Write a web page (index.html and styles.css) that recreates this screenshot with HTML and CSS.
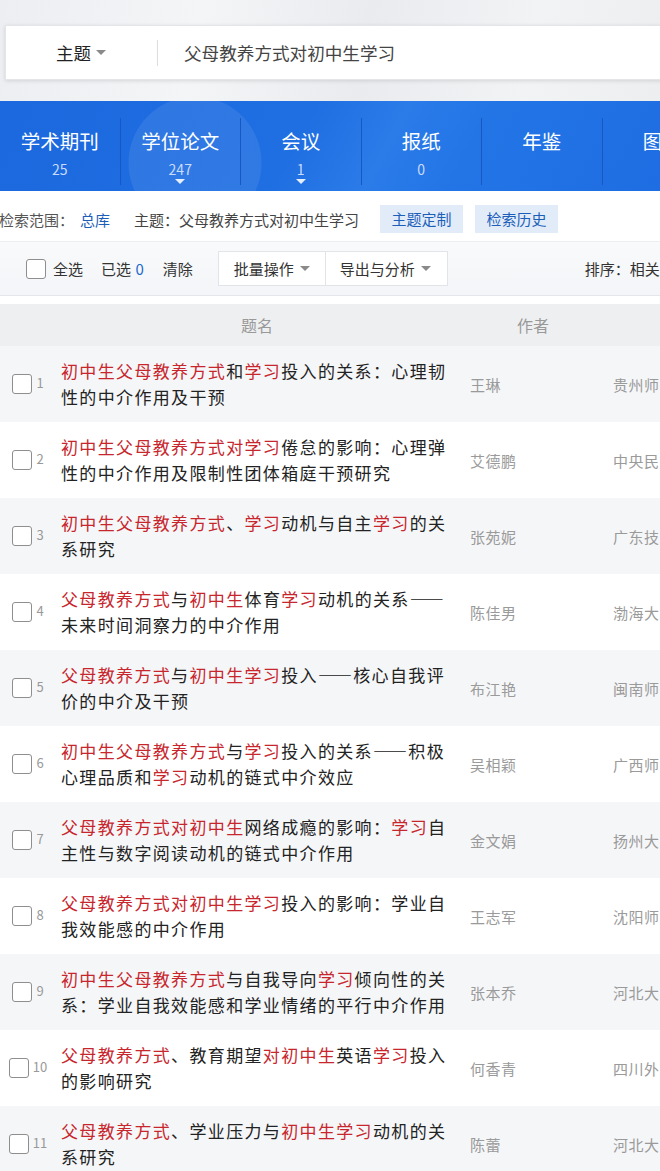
FILE: index.html
```html
<!DOCTYPE html>
<html lang="zh-CN">
<head>
  <meta charset="UTF-8" />
  <meta name="viewport" content="width=device-width, initial-scale=1.0"/>
  <title>检索结果</title>
  <link rel="stylesheet" href="styles.css">
</head>
<body>
  <!-- 검색창 -->
  <div class="top">
    <div class="search-box">
      <div class="field">主题 <span class="caret"></span></div>
      <div class="divider"></div>
      <div class="query">父母教养方式对初中生学习</div>
    </div>
  </div>

  <!-- 문헌 유형 탭 -->
  <div class="tabs">
    <div class="tab"><div class="tab-name">学术期刊</div><div class="tab-num">25</div></div>
    <div class="tab"><div class="tab-name">学位论文</div><div class="tab-num">247</div><span class="tab-caret"></span></div>
    <div class="tab"><div class="tab-name">会议</div><div class="tab-num">1</div><span class="tab-caret"></span></div>
    <div class="tab"><div class="tab-name">报纸</div><div class="tab-num">0</div></div>
    <div class="tab"><div class="tab-name">年鉴</div><div class="tab-num">&nbsp;</div></div>
    <div class="tab"><div class="tab-name">图书</div><div class="tab-num">&nbsp;</div></div>
  </div>

  <div class="scope">
    <span class="scope-label">检索范围：</span>
    <span class="scope-db">总库</span>
    <span class="scope-topic">主题：父母教养方式对初中生学习</span>
    <span class="chip">主题定制</span>
    <span class="chip">检索历史</span>
  </div>

  <div class="toolbar">
    <span class="box"></span>
    <span class="tool-text">全选</span>
    <span class="tool-text sel">已选 <em>0</em></span>
    <span class="tool-text">清除</span>
    <div class="drop-group">
      <div class="drop">批量操作 <span class="caret"></span></div>
      <div class="drop">导出与分析 <span class="caret"></span></div>
    </div>
    <span class="sort">排序：相关度</span>
  </div>

  <div class="thead">
    <div></div>
    <div class="th-title">题名</div>
    <div class="th-author">作者</div>
    <div></div>
  </div>

  <div id="list"></div>

  <script>
    // 결과 목록: [제목(HTML), 저자, 기관]
    const rows = [
      ['<b>初中生父母教养方式</b>和<b>学习</b>投入的关系：心理韧性的中介作用及干预', '王琳', '贵州师范大学'],
      ['<b>初中生父母教养方式对学习</b>倦怠的影响：心理弹性的中介作用及限制性团体箱庭干预研究', '艾德鹏', '中央民族大学'],
      ['<b>初中生父母教养方式</b>、<b>学习</b>动机与自主<b>学习</b>的关系研究', '张苑妮', '广东技术师范大学'],
      ['<b>父母教养方式</b>与<b>初中生</b>体育<b>学习</b>动机的关系——未来时间洞察力的中介作用', '陈佳男', '渤海大学'],
      ['<b>父母教养方式</b>与<b>初中生学习</b>投入——核心自我评价的中介及干预', '布江艳', '闽南师范大学'],
      ['<b>初中生父母教养方式</b>与<b>学习</b>投入的关系——积极心理品质和<b>学习</b>动机的链式中介效应', '吴相颖', '广西师范大学'],
      ['<b>父母教养方式对初中生</b>网络成瘾的影响：<b>学习</b>自主性与数字阅读动机的链式中介作用', '金文娟', '扬州大学'],
      ['<b>父母教养方式对初中生学习</b>投入的影响：学业自我效能感的中介作用', '王志军', '沈阳师范大学'],
      ['<b>初中生父母教养方式</b>与自我导向<b>学习</b>倾向性的关系：学业自我效能感和学业情绪的平行中介作用', '张本乔', '河北大学'],
      ['<b>父母教养方式</b>、教育期望<b>对初中生</b>英语<b>学习</b>投入的影响研究', '何香青', '四川外国语大学'],
      ['<b>父母教养方式</b>、学业压力与<b>初中生学习</b>动机的关系研究', '陈蕾', '河北大学']
    ];

    const list = document.getElementById('list');
    rows.forEach((r, i) => {
      const row = document.createElement('div');
      row.className = 'row' + (i % 2 === 0 ? ' odd' : '');
      row.innerHTML =
        `<div class="idx"><span class="box"></span><span class="num">${i + 1}</span></div>` +
        `<div class="title">${r[0]}</div>` +
        `<div class="author">${r[1]}</div>` +
        `<div class="org">${r[2]}</div>`;
      list.appendChild(row);
    });
  </script>
</body>
</html>
```

FILE: styles.css
```css
* { box-sizing: border-box; }
body {
  margin: 0;
  width: 660px;
  height: 1171px;
  overflow: hidden;
  background: #fff;
  font-family: "Noto Sans CJK SC", "Noto Sans", sans-serif;
  color: #333;
}

/* 상단 검색 */
.top {
  height: 101px;
  padding: 25px 0 0 5px;
  background: linear-gradient(100deg, #eceef1 0%, #f4f5f7 30%, #e9ebee 55%, #f2f3f5 80%, #eceef0 100%);
  overflow: hidden;
}
.search-box {
  width: 670px;
  height: 55px;
  background: #fff;
  border: 1px solid #e3e5e8;
  box-shadow: 0 1px 4px rgba(0,0,0,0.12);
  display: flex;
  align-items: center;
}
.field {
  width: 151px;
  padding-left: 50px;
  font-size: 17.5px;
  color: #222;
  display: flex;
  align-items: center;
  gap: 5px;
}
.divider { width: 1px; height: 26px; background: #ddd; }
.query { padding-left: 26px; font-size: 17.6px; color: #444; }
.caret {
  display: inline-block;
  width: 0; height: 0;
  border-left: 5px solid transparent;
  border-right: 5px solid transparent;
  border-top: 5px solid #8a8a8a;
}

/* 탭 */
.tabs {
  height: 90px;
  display: flex;
  overflow: hidden;
  background:
    radial-gradient(circle at 195px 62px, rgba(255,255,255,0.08) 0 66px, transparent 67px),
    linear-gradient(118deg, #1c68de 0%, #1f6fe2 45%, #2b7be9 58%, #2375e6 70%, #1e6de2 100%);
  padding-top: 17px;
}
.tab {
  flex: 0 0 120.5px;
  position: relative;
  text-align: center;
  color: #fff;
  border-right: 1px solid #1858c4;
  height: 67px;
  padding-top: 9px;
}
.tab-name { font-size: 19.5px; line-height: 28px; }
.tab-num { font-size: 14px; line-height: 28px; color: #c9dcfb; }
.tab-caret {
  position: absolute;
  left: 50%; bottom: 1px;
  margin-left: -5px;
  border-left: 5px solid transparent;
  border-right: 5px solid transparent;
  border-top: 5px solid #e6efff;
}

/* 검색 범위 */
.scope {
  height: 50px;
  padding-top: 6px;
  display: flex;
  align-items: center;
  font-size: 15px;
  color: #555;
  margin-left: -1px;
  white-space: nowrap;
}
.scope-db { color: #1d5fb8; margin-left: 6px; }
.scope-topic { margin-left: 24px; color: #444; }
.chip {
  background: #e2ecf8;
  color: #1d5fb8;
  height: 28px;
  line-height: 28px;
  padding: 0 11.5px;
  margin-left: 12px;
}
.scope-topic + .chip { margin-left: 21px; }

/* 툴바 */
.toolbar {
  height: 55px;
  display: flex;
  align-items: center;
  background: linear-gradient(#f9fafb, #f3f5f8);
  border-top: 1px solid #eceef1;
  border-bottom: 1px solid #e3e6ea;
  padding-left: 26px;
  font-size: 15px;
  color: #333;
  white-space: nowrap;
}
.box {
  display: inline-block;
  width: 20px; height: 20px;
  border: 1.5px solid #8e8e8e;
  border-radius: 3px;
  background: #fff;
  flex-shrink: 0;
}
.tool-text { margin-left: 7px; }
.tool-text.sel { margin-left: 18px; }
.tool-text + .tool-text + .tool-text { margin-left: 19px; }
.tool-text em { font-style: normal; color: #1d6bd0; margin-left: 1px; }
.drop-group { display: flex; margin-left: 25px; }
.drop {
  height: 35px;
  display: flex;
  align-items: center;
  gap: 6px;
  padding: 0 15px;
  background: #fff;
  border: 1px solid #e1e4e8;
}
.drop + .drop { border-left: none; padding: 0 16px 0 14px; }
.sort { margin-left: 137px; }

/* 결과 표 */
.thead {
  margin-top: 8px;
  height: 42px;
  background: #eeeff1;
  display: grid;
  grid-template-columns: 61px 392px 160px 1fr;
  align-items: center;
  font-size: 16px;
  color: #999;
}
.th-title { text-align: center; }
.th-author { padding-left: 64px; }

.row {
  height: 76px;
  display: grid;
  grid-template-columns: 61px 392px 160px 1fr;
  align-items: center;
  background: #fff;
}
.row.odd { background: #f5f6f8; }
.idx {
  display: flex;
  justify-content: center;
  align-items: center;
  padding-right: 5px;
  gap: 4px;
}
.num { font-size: 13px; color: #999; margin-top: -4px; }
.title {
  font-size: 17px;
  line-height: 26px;
  letter-spacing: 1.35px;
  color: #222;
  word-break: break-all;
}
.title b { font-weight: normal; color: #c8262d; }
.author { padding-left: 17px; font-size: 15px; color: #9a9a9a; letter-spacing: 0.5px; }
.org { font-size: 15px; color: #9a9a9a; white-space: nowrap; overflow: hidden; letter-spacing: 0.5px; }
```
